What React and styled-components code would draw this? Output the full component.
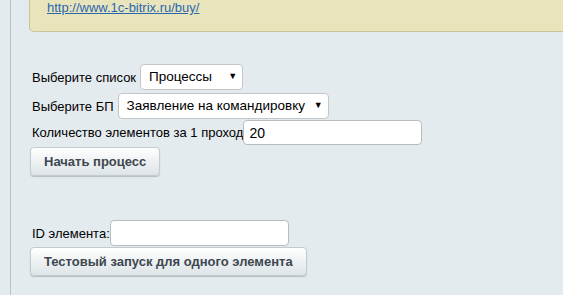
import React from "react";
import styled, { createGlobalStyle } from "styled-components";

const Global = createGlobalStyle`
  body {
    margin: 0;
    background: #e4ebee;
    font-family: "Liberation Sans", Arial, sans-serif;
    font-size: 13px;
    color: #000;
  }
`;

const Page = styled.div`
  margin-left: 10px;
  min-height: 295px;
  border-left: 1px solid #b3c2cd;
  padding-left: 18px;
  overflow: hidden;
`;

const Notice = styled.div`
  background: #e8e4bb;
  border: 1px solid #c9c597;
  border-top: none;
  border-radius: 0 0 0 5px;
  margin-right: -10px;
  padding: 0 17px 15px;
  line-height: 16px;
`;

const Link = styled.a`
  color: #2a67b1;
  text-decoration: underline;
`;

const Form = styled.div`
  margin: 32px 0 0 2px;
  display: flex;
  flex-direction: column;
`;

const Row = styled.div`
  display: flex;
  align-items: center;
  gap: ${(p) => p.$gap || 0}px;
  margin-top: ${(p) => p.$top || 0}px;
`;

const Label = styled.span`
  padding-left: 1px;
  white-space: nowrap;
`;

const SelectBox = styled.div`
  position: relative;
  width: ${(p) => p.$w}px;
  height: 26px;
  box-sizing: border-box;
  border: 1px solid #c3c6c9;
  border-radius: 4px;
  background: #fff;
  font-size: 13.5px;
  line-height: 24px;
  padding-left: 8px;
  white-space: nowrap;
`;

const Arrow = styled.span`
  position: absolute;
  right: 5px;
  top: 0;
  font-size: 9px;
  line-height: 23px;
`;

const Input = styled.input`
  width: 179px;
  height: ${(p) => p.$h || 25}px;
  box-sizing: border-box;
  border: 1px solid #b9bcbf;
  border-radius: 4px;
  background: #fff;
  font-family: inherit;
  font-size: 14px;
  padding: 0 5px;
  outline: none;
`;

const Button = styled.button`
  height: 29px;
  box-sizing: border-box;
  padding: 0 13px;
  margin-top: ${(p) => p.$top || 0}px;
  align-self: flex-start;
  border: 1px solid #c4cbcf;
  border-radius: 4px;
  background: linear-gradient(#ffffff, #dde4e7);
  box-shadow: 0 1px 1px rgba(0, 0, 0, 0.2);
  font-family: inherit;
  font-size: 13px;
  font-weight: bold;
  color: #3e474f;
  margin-left: -1px;
`;

const Select = ({ width, value }) => (
  <SelectBox $w={width}>
    {value}
    <Arrow>▼</Arrow>
  </SelectBox>
);

export default function App() {
  return (
    <>
      <Global />
      <Page>
        <Notice>
          <Link href="#">http://www.1c-bitrix.ru/buy/</Link>
        </Notice>
        <Form>
          <Row $gap={4}>
            <Label>Выберите список</Label>
            <Select width={103} value="Процессы" />
          </Row>
          <Row $gap={4} $top={3}>
            <Label>Выберите БП</Label>
            <Select width={211} value="Заявление на командировку" />
          </Row>
          <Row $top={1}>
            <Label>Количество элементов за 1 проход</Label>
            <Input defaultValue="20" />
          </Row>
          <Button $top={2}>Начать процесс</Button>
          <Row $top={44}>
            <Label>ID элемента:</Label>
            <Input $h={26} />
          </Row>
          <Button $top={1}>Тестовый запуск для одного элемента</Button>
        </Form>
      </Page>
    </>
  );
}
